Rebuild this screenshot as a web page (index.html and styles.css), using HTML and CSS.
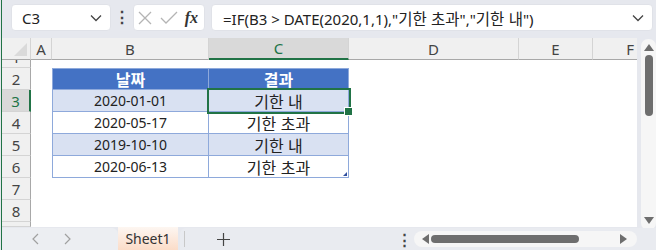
FILE: index.html
```html
<!doctype html>
<html lang="ko">
    <head>
        <meta charset="UTF-8" />
        <title>Sheet1</title>
        <link rel="stylesheet" href="styles.css">
    </head>
    <body>
        <div class="app">
            <div class="formula-bar">
                <div class="name-box">
                    <span>C3</span>
                    <svg width="12" height="8" viewBox="0 0 12 8"><path d="M1 1.5l5 5 5-5" fill="none" stroke="#444" stroke-width="1.3"/></svg>
                </div>
                <div class="bar-dots">⋮</div>
                <div class="fx-box">
                    <svg width="16" height="16" viewBox="0 0 16 16"><path d="M2 2l12 12M14 2L2 14" stroke="#b4b4b4" stroke-width="1.3"/></svg>
                    <svg width="18" height="14" viewBox="0 0 18 14"><path d="M1 7l5 5L17 1" fill="none" stroke="#b4b4b4" stroke-width="1.3"/></svg>
                    <span class="fx">fx</span>
                </div>
                <div class="formula-input">
                    <span>=IF(B3 &gt; DATE(2020,1,1),"<span class="ko">기한 초과</span>","<span class="ko">기한 내</span>")</span>
                    <svg width="12" height="8" viewBox="0 0 12 8"><path d="M1 1.5l5 5 5-5" fill="none" stroke="#444" stroke-width="1.3"/></svg>
                </div>
            </div>

            <div class="sheet-area">
                <div class="grid">
                    <div class="corner"></div>
                    <div class="col-head">A</div>
                    <div class="col-head">B</div>
                    <div class="col-head selected">C</div>
                    <div class="col-head">D</div>
                    <div class="col-head">E</div>
                    <div class="col-head last">F</div>

                    <div class="row-head row-first"><span>1</span></div>
                    <div class="cell"></div><div class="cell"></div><div class="cell"></div><div class="cell"></div><div class="cell"></div><div class="cell"></div>

                    <div class="row-head">2</div>
                    <div class="cell"></div>
                    <div class="cell t-head t-left ko">날짜</div>
                    <div class="cell t-head t-right ko">결과</div>
                    <div class="cell"></div><div class="cell"></div><div class="cell"></div>

                    <div class="row-head selected">3</div>
                    <div class="cell"></div>
                    <div class="cell t-cell t-band t-left">2020-01-01</div>
                    <div class="cell t-cell t-band t-right ko active">기한 내</div>
                    <div class="cell"></div><div class="cell"></div><div class="cell"></div>

                    <div class="row-head">4</div>
                    <div class="cell"></div>
                    <div class="cell t-cell t-left">2020-05-17</div>
                    <div class="cell t-cell t-right ko">기한 초과</div>
                    <div class="cell"></div><div class="cell"></div><div class="cell"></div>

                    <div class="row-head">5</div>
                    <div class="cell"></div>
                    <div class="cell t-cell t-band t-left">2019-10-10</div>
                    <div class="cell t-cell t-band t-right ko">기한 내</div>
                    <div class="cell"></div><div class="cell"></div><div class="cell"></div>

                    <div class="row-head">6</div>
                    <div class="cell"></div>
                    <div class="cell t-cell t-left">2020-06-13</div>
                    <div class="cell t-cell t-right t-end ko">기한 초과</div>
                    <div class="cell"></div><div class="cell"></div><div class="cell"></div>

                    <div class="row-head">7</div>
                    <div class="cell"></div><div class="cell"></div><div class="cell"></div><div class="cell"></div><div class="cell"></div><div class="cell"></div>

                    <div class="row-head">8</div>
                    <div class="cell"></div><div class="cell"></div><div class="cell"></div><div class="cell"></div><div class="cell"></div><div class="cell"></div>

                    <div class="row-head"></div>
                    <div class="cell"></div><div class="cell"></div><div class="cell"></div><div class="cell"></div><div class="cell"></div><div class="cell"></div>
                </div>

                <div class="vscroll">
                    <svg width="10" height="7" viewBox="0 0 10 7"><path d="M0 7L5 0l5 7z" fill="#6e6e6e"/></svg>
                    <div class="vscroll-track"><div class="vscroll-thumb"></div></div>
                    <svg width="10" height="7" viewBox="0 0 10 7"><path d="M0 0l5 7 5-7z" fill="#6e6e6e"/></svg>
                </div>
            </div>

            <div class="tab-bar">
                <div class="tab-nav">
                    <svg width="8" height="12" viewBox="0 0 8 12"><path d="M7 1L2 6l5 5" fill="none" stroke="#a0a0a0" stroke-width="1.2"/></svg>
                    <svg width="8" height="12" viewBox="0 0 8 12"><path d="M1 1l5 5-5 5" fill="none" stroke="#a0a0a0" stroke-width="1.2"/></svg>
                </div>
                <div class="sheet-tab">Sheet1</div>
                <div class="tab-rest">
                    <div class="add-sheet">
                        <svg width="13" height="13" viewBox="0 0 13 13"><path d="M6.5 0v13M0 6.5h13" stroke="#444" stroke-width="1.2"/></svg>
                    </div>
                    <div class="tab-dots">⋮</div>
                    <div class="hscroll">
                        <svg width="7" height="10" viewBox="0 0 7 10"><path d="M7 0L0 5l7 5z" fill="#6e6e6e"/></svg>
                        <div class="hscroll-thumb"></div>
                        <svg width="7" height="10" viewBox="0 0 7 10"><path d="M0 0l7 5-7 5z" fill="#6e6e6e"/></svg>
                    </div>
                </div>
            </div>
        </div>
    </body>
</html>
```

FILE: styles.css
```css
* {
    margin: 0;
    padding: 0;
    box-sizing: border-box;
}

body {
    width: 656px;
    height: 250px;
    overflow: hidden;
    background: #e6e8ee;
    font-family: "Noto Sans", "Noto Sans CJK KR", sans-serif;
    color: #222;
}

.ko {
    font-family: "Noto Sans CJK KR", sans-serif;
    font-size: 16px;
}

.app {
    height: 250px;
    margin-left: 1px;
    border-left: 1px solid #217346;
    display: flex;
    flex-direction: column;
}

/* formula bar */

.formula-bar {
    height: 38px;
    display: flex;
    align-items: flex-start;
    padding: 4px 3px 0 9px;
}

.name-box,
.fx-box,
.formula-input {
    height: 27px;
    background: #fff;
    border: 1px solid #e0e2e8;
    border-radius: 4px;
    display: flex;
    align-items: center;
}

.name-box {
    width: 100px;
    padding: 0 8px 0 10px;
    justify-content: space-between;
    font-size: 15px;
}

.bar-dots {
    width: 22px;
    text-align: center;
    font-size: 16px;
    font-weight: 700;
    line-height: 27px;
    color: #444;
}

.fx-box {
    width: 72px;
    padding: 0 6px 0 3px;
    justify-content: space-between;
}

.fx {
    font-family: "Liberation Serif", serif;
    font-style: italic;
    font-weight: 700;
    font-size: 16px;
    color: #333;
}

.formula-input {
    flex: 1;
    margin-left: 6px;
    padding: 0 8px 0 11px;
    justify-content: space-between;
    font-size: 15px;
    white-space: pre;
}

.formula-input .ko {
    font-size: 15.5px;
}

/* sheet */

.sheet-area {
    height: 189px;
    display: flex;
}

.grid {
    width: 635px;
    height: 189px;
    overflow: hidden;
    background: #fff;
    display: grid;
    grid-template-columns: 29px 21px 157px 140px 170px 74px 44px;
    grid-template-rows: 22px 8px repeat(7, 22px) 5px;
    font-size: 14px;
}

.corner {
    background: #f0f0f0;
    border-right: 1px solid #d4d4d4;
    border-bottom: 1px solid #a8a8a8;
    position: relative;
}

.corner::after {
    content: "";
    position: absolute;
    right: 3px;
    bottom: 3px;
    border-left: 13px solid transparent;
    border-bottom: 13px solid #dadada;
}

.col-head {
    background: #f0f0f0;
    border-right: 1px solid #d4d4d4;
    border-bottom: 1px solid #a8a8a8;
    display: flex;
    align-items: center;
    justify-content: center;
    font-size: 15px;
    color: #444;
}

.col-head.last {
    justify-content: flex-end;
    padding-right: 3px;
    border-right: none;
}

.col-head.selected {
    background: #d9d9d9;
    border-bottom: 2px solid #217346;
    color: #217346;
}

.row-head {
    background: #f0f0f0;
    border-right: 1px solid #a8a8a8;
    border-bottom: 1px solid #d4d4d4;
    display: flex;
    align-items: center;
    justify-content: center;
    font-size: 15px;
    color: #444;
    overflow: hidden;
}

.row-first {
    align-items: flex-end;
}

.row-first span {
    line-height: 22px;
    margin-bottom: -1px;
}

.row-head.selected {
    background: #d9d9d9;
    border-right: 2px solid #217346;
    color: #217346;
}

.cell {
    display: flex;
    align-items: center;
    justify-content: center;
}

.t-head {
    background: #4472c4;
    color: #fff;
    font-weight: 700;
    border-top: 1px solid #8ea9db;
    border-bottom: 1px solid #8ea9db;
}

.t-cell {
    border-bottom: 1px solid #8ea9db;
}

.t-left {
    border-left: 1px solid #8ea9db;
    border-right: 1px solid #8ea9db;
}

.t-right {
    border-right: 1px solid #8ea9db;
}

.t-band {
    background: #d9e1f2;
}

.t-end {
    position: relative;
}

.t-end::after {
    content: "";
    position: absolute;
    right: 1px;
    bottom: 1px;
    border-left: 4px solid transparent;
    border-bottom: 4px solid #2f4f9e;
}

.active {
    position: relative;
    outline: 2px solid #217346;
    outline-offset: 0;
    z-index: 1;
}

.active::after {
    content: "";
    position: absolute;
    right: -5px;
    bottom: -5px;
    width: 7px;
    height: 7px;
    background: #217346;
    border: 1px solid #fff;
}

/* scrollbars */

.vscroll {
    width: 15px;
    margin: 1px 0 -3px 4px;
    background: #f6f6f6;
    border-radius: 7px;
    display: flex;
    flex-direction: column;
    align-items: center;
    padding: 5px 0 6px;
    gap: 3px;
}

.vscroll-track {
    flex: 1;
    width: 100%;
    display: flex;
    justify-content: center;
}

.vscroll-thumb {
    width: 8px;
    height: 61px;
    margin-top: 1px;
    border-radius: 4px;
    background: #6e6e6e;
}

.tab-bar {
    height: 23px;
    display: flex;
    align-items: flex-end;
}

.tab-nav {
    width: 116px;
    height: 22px;
    background: #eceef2;
    border-top-right-radius: 6px;
    display: flex;
    align-items: center;
    gap: 25px;
    padding-left: 29px;
}

.sheet-tab {
    width: 60px;
    height: 23px;
    background: linear-gradient(#fdf6f1, #fbdcc8);
    font-size: 14px;
    color: #333;
    display: flex;
    align-items: center;
    justify-content: center;
    margin-right: 2px;
}

.tab-rest {
    flex: 1;
    height: 22px;
    background: #e9ebf0;
    border-top-left-radius: 6px;
    display: flex;
    align-items: center;
}

.add-sheet {
    width: 78px;
    height: 16px;
    border-left: 1px solid #c8c8c8;
    margin-left: 4px;
    display: flex;
    align-items: center;
    justify-content: center;
}

.tab-dots {
    margin-left: 135px;
    width: 16px;
    font-size: 15px;
    font-weight: 700;
    color: #444;
}

.hscroll {
    width: 223px;
    height: 16px;
    margin-left: 1px;
    background: #f6f6f6;
    border-radius: 8px;
    display: flex;
    align-items: center;
    padding: 0 10px 0 8px;
}

.hscroll-thumb {
    width: 148px;
    height: 8px;
    margin: 0 auto 0 2px;
    border-radius: 4px;
    background: #6e6e6e;
}
```
